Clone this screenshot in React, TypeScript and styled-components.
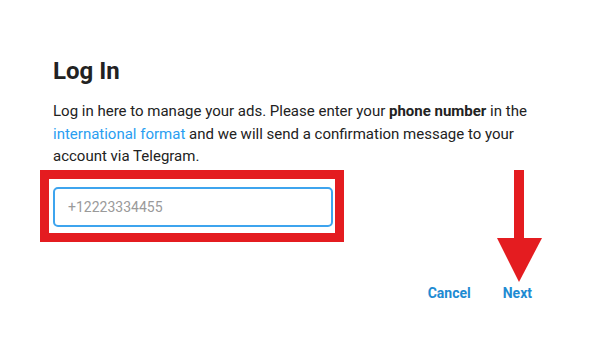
import React from "react";
import styled, { createGlobalStyle } from "styled-components";

const GlobalStyle = createGlobalStyle`
  html, body { margin: 0; padding: 0; background: #ffffff; }
  body { font-family: Roboto, "Liberation Sans", Arial, sans-serif; color: #222222; }
  * { box-sizing: border-box; }
`;

const Page = styled.div`
  width: 590px;
  height: 338px;
  position: relative;
  overflow: hidden;
`;

const Dialog = styled.div`
  padding: 57px 0 0 53px;
  width: 537px;
  display: flex;
  flex-direction: column;
`;

const Title = styled.h1`
  margin: 0;
  font-size: 24px;
  line-height: 28px;
  font-weight: 700;
  color: #222222;
`;

const Intro = styled.p`
  margin: 15px 0 0;
  font-size: 15px;
  line-height: 22.5px;
  color: #222222;
  width: 484px;
`;

const Link = styled.a`
  color: #2a9ef1;
  text-decoration: none;
`;

const Field = styled.div`
  position: relative;
  margin-top: 19px;
  width: 280px;
`;

const PhoneInput = styled.input`
  display: block;
  width: 280px;
  height: 40px;
  border: 2px solid #3ea4ee;
  border-radius: 5px;
  padding: 0 12px 0 13px;
  font-family: Roboto, "Liberation Sans", Arial, sans-serif;
  font-size: 14px;
  color: #222;
  outline: none;
  caret-color: #000;
  &::placeholder { color: #9a9a9a; }
`;

const Highlight = styled.div`
  position: absolute;
  left: -13px;
  top: -17px;
  width: 304px;
  height: 72px;
  border: 9px solid #e41c20;
  pointer-events: none;
`;

const Actions = styled.div`
  display: flex;
  justify-content: flex-end;
  gap: 32px;
  width: 484px;
  margin-top: 58px;
  padding-right: 5px;
`;

const ActionButton = styled.button`
  background: none;
  border: none;
  padding: 0;
  font-family: Roboto, "Liberation Sans", Arial, sans-serif;
  font-size: 14px;
  font-weight: 700;
  line-height: 16px;
  color: #1e8bd2;
  cursor: pointer;
`;

const Arrow = styled.svg`
  position: absolute;
  left: 496px;
  top: 170px;
`;

export default function App() {
  return (
    <Page>
      <GlobalStyle />
      <Dialog>
        <Title>Log In</Title>
        <Intro>
          Log in here to manage your ads. Please enter your <b>phone number</b> in the{" "}
          <Link href="#">international format</Link> and we will send a confirmation message to your
          account via Telegram.
        </Intro>
        <Field>
          <PhoneInput placeholder="+12223334455" autoFocus />
          <Highlight />
        </Field>
        <Actions>
          <ActionButton>Cancel</ActionButton>
          <ActionButton>Next</ActionButton>
        </Actions>
      </Dialog>
      <Arrow width="48" height="114" viewBox="0 0 48 114">
        <rect x="18" y="0" width="10" height="69" fill="#e41c20" />
        <polygon points="1,68 46,68 23,112" fill="#e41c20" />
      </Arrow>
    </Page>
  );
}
